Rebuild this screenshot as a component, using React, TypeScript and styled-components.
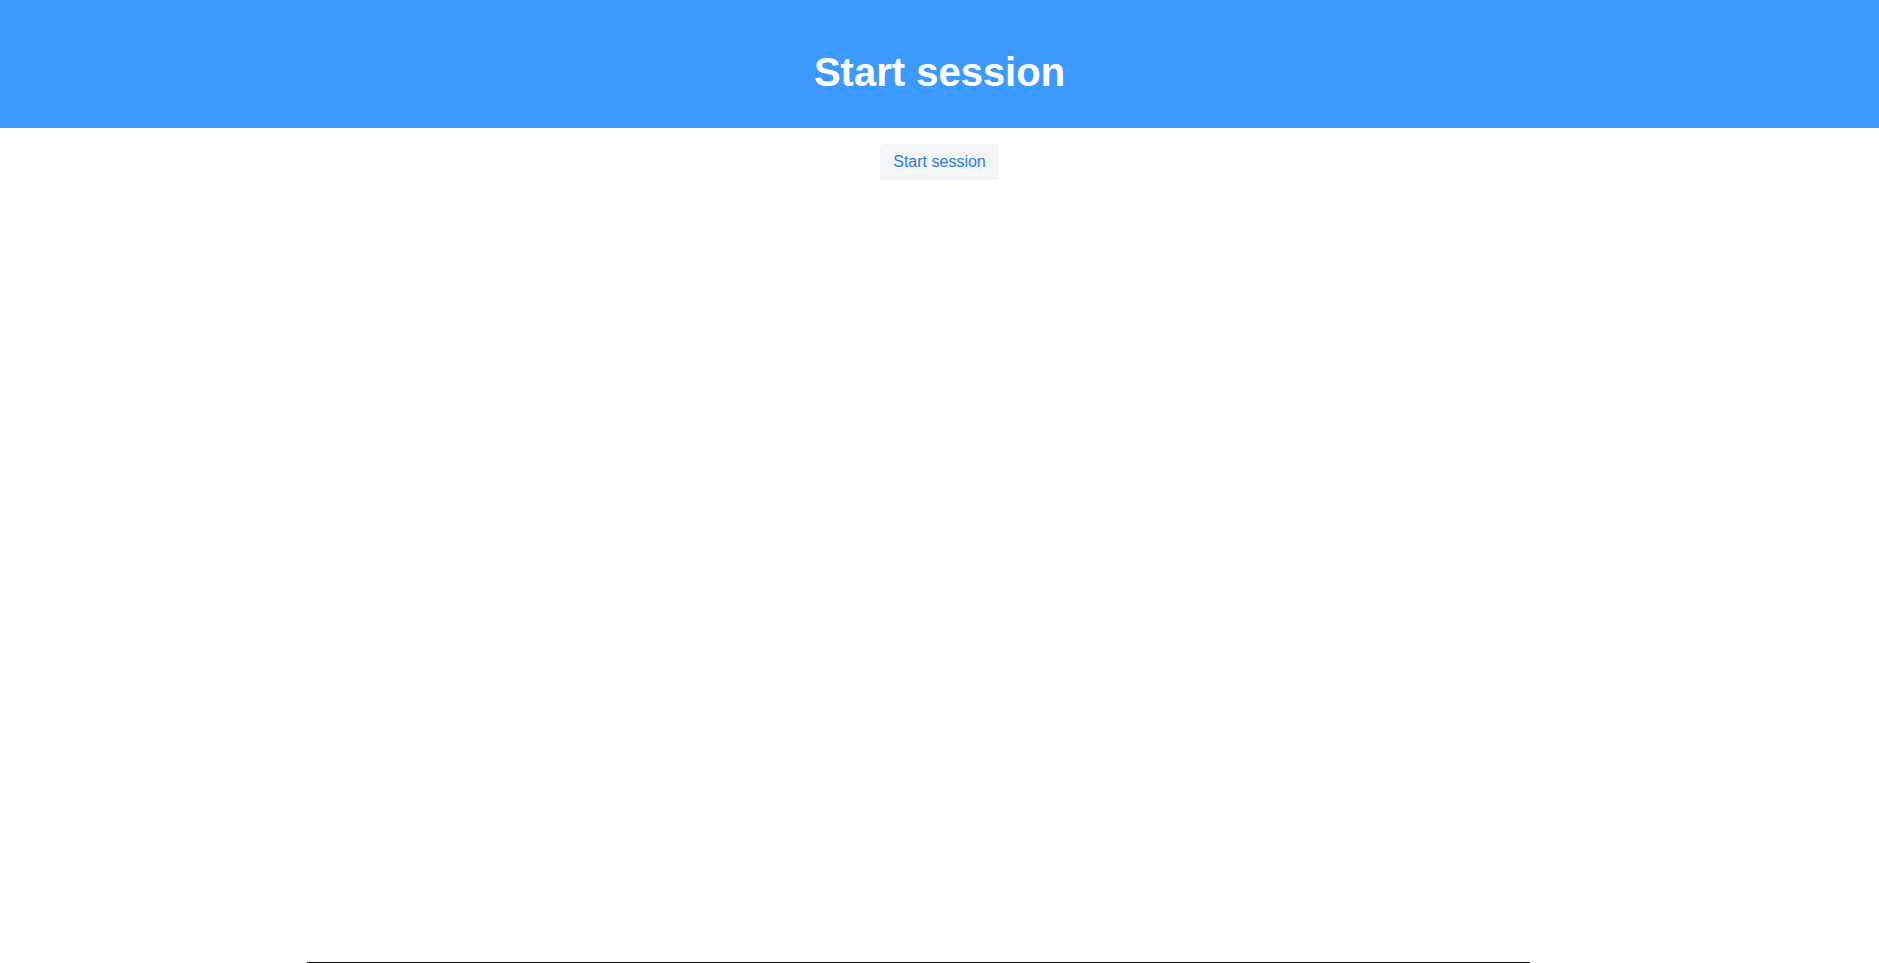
import React from "react";
import styled, { createGlobalStyle } from "styled-components";

const Global = createGlobalStyle`
  html, body { margin: 0; padding: 0; background: #ffffff; }
  body { font-family: "Liberation Sans", Arial, sans-serif; }
`;

const Page = styled.div`
  display: flex;
  flex-direction: column;
  height: 100vh;
  box-sizing: border-box;
`;

const Header = styled.header`
  height: 128px;
  box-sizing: border-box;
  padding-top: 52px;
  background: #3c9aff;
  display: flex;
  align-items: flex-start;
  justify-content: center;
  flex-shrink: 0;
`;

const Title = styled.h1`
  margin: 0;
  color: #ffffff;
  font-size: 40px;
  line-height: 40px;
  font-weight: 700;
  font-family: "Liberation Sans", Arial, sans-serif;
`;

const Main = styled.main`
  flex: 1;
  display: flex;
  flex-direction: column;
  align-items: center;
  padding-top: 16px;
`;

const Button = styled.button`
  height: 36px;
  padding: 0 13px;
  border: none;
  border-radius: 4px;
  background: #f3f4f6;
  color: #2a7bf5;
  font-family: "Liberation Sans", Arial, sans-serif;
  font-size: 16px;
  cursor: pointer;
`;

const Footer = styled.div`
  display: flex;
  padding-left: 307px;
  height: 1px;
  flex-shrink: 0;
`;

const Rule = styled.div`
  width: 1223px;
  height: 1px;
  background: #111111;
`;

export default function App() {
  return (
    <>
      <Global />
      <Page>
        <Header>
          <Title>Start session</Title>
        </Header>
        <Main>
          <Button>Start session</Button>
        </Main>
        <Footer>
          <Rule />
        </Footer>
      </Page>
    </>
  );
}
